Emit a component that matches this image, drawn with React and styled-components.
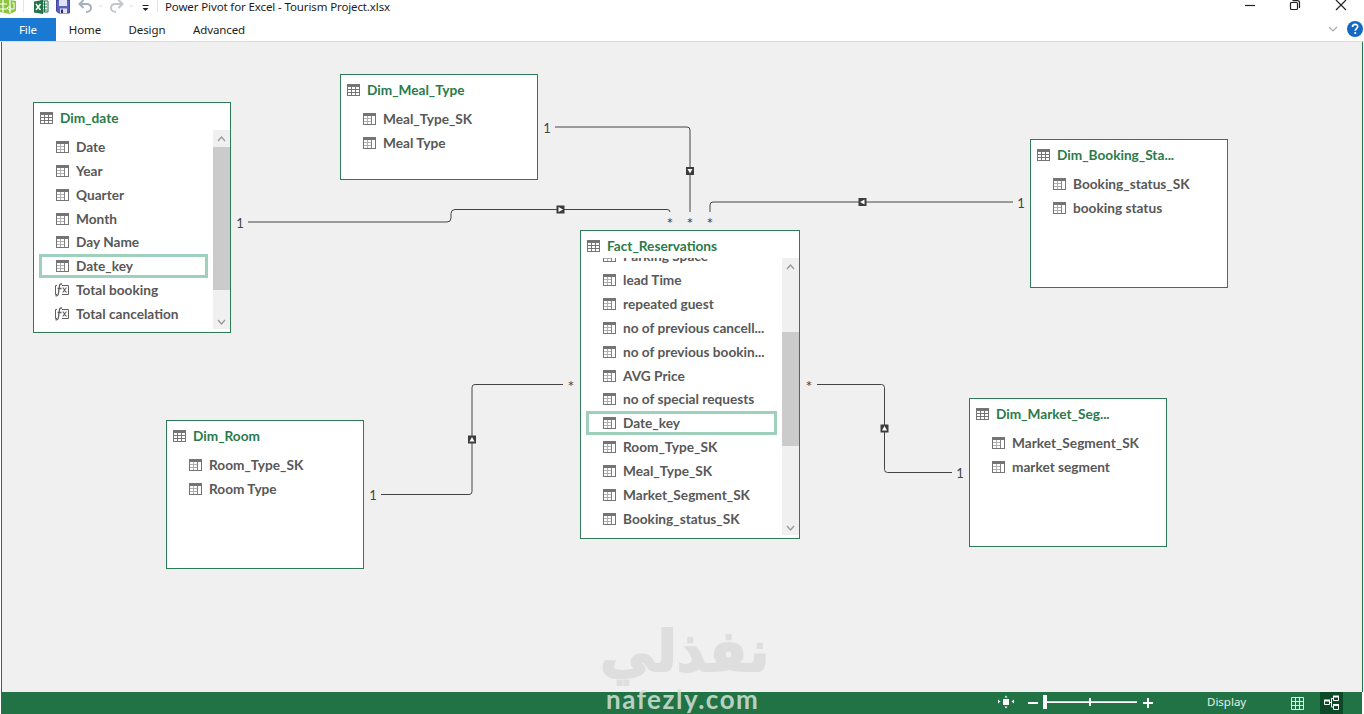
import styled, { createGlobalStyle, css } from 'styled-components'

const GlobalStyle = createGlobalStyle`
  * { box-sizing: border-box; }
  body {
    margin: 0;
    overflow: hidden;
    background: #fff;
    font-family: 'Noto Sans', 'Open Sans', sans-serif;
    font-size: 11.5px;
    color: #1c1c1c;
  }
  svg { display: block; flex: none; }
`

const Window = styled.div`
  width: 1364px;
  height: 714px;
  display: flex;
  flex-direction: column;
  background: #fff;
`

const TitleBar = styled.header`
  display: flex;
  justify-content: space-between;
  height: 18px;
`

const QuickAccess = styled.div`
  display: flex;
  align-items: flex-start;
`

const Title = styled.span`
  margin-left: 7px;
  line-height: 14px;
  font-size: 11.5px;
  letter-spacing: -0.12px;
  white-space: nowrap;
`

const Ribbon = styled.nav`
  display: flex;
  height: 24px;
  border-bottom: 1px solid #dcdcdc;
`

const Tab = styled.div`
  width: ${p => p.$w}px;
  height: 23px;
  line-height: 24px;
  text-align: center;
  font-size: 11.5px;
  letter-spacing: -0.1px;
  ${p => p.$active && css`
    background: #1979d3;
    color: #fff;
  `}
`

const RibbonEnd = styled.div`
  display: flex;
  align-items: flex-start;
  margin-left: auto;
  padding-top: 1px;
`

const Canvas = styled.main`
  position: relative;
  height: 650px;
  margin: 0 1px;
  background: #f0f0f0;
  border-left: 1px solid #217346;
  border-right: 1px solid #217346;
  font-family: Lato, 'Open Sans', sans-serif;
`

const Card = styled.section`
  position: absolute;
  left: ${p => p.$x}px;
  top: ${p => p.$y}px;
  width: ${p => p.$w}px;
  height: ${p => p.$h}px;
  display: flex;
  flex-direction: column;
  background: #fff;
  border: 1px solid #2f7a57;
  font-weight: 700;
  font-size: 13.67px;
  color: #585858;
`

const CardHead = styled.div`
  display: flex;
  align-items: center;
  gap: 7px;
  flex: none;
  height: 27px;
  padding: 3px 0 0 6px;
  color: #2a7a4c;
  white-space: nowrap;
  line-height: 18px;
`

const CardBody = styled.div`
  display: flex;
  flex: 1;
  min-height: 0;
  overflow: hidden;
  padding-bottom: 3px;
`

const Fields = styled.div`
  flex: 1;
  min-width: 0;
  overflow: hidden;
  padding: 0 5px;
`

const FieldList = styled.div`
  margin-top: ${p => p.$offset}px;
`

const Field = styled.div`
  display: flex;
  align-items: center;
  gap: 7px;
  height: 23.87px;
  padding-left: 14px;
  border: 3px solid ${p => (p.$selected ? '#9fd0bc' : 'transparent')};
  white-space: nowrap;
  line-height: 18px;
`

const Scrollbar = styled.div`
  display: flex;
  flex-direction: column;
  justify-content: space-between;
  width: 17px;
  background: #f0f0f0;
`

const Track = styled.div`
  flex: 1;
  padding-top: ${p => p.$before}px;
`

const Thumb = styled.div`
  height: ${p => p.$h}px;
  background: #cbcbcb;
`

const Links = styled.svg`
  position: absolute;
  left: 0;
  top: 0;
`

const Mark = styled.span`
  position: absolute;
  left: ${p => p.$x}px;
  top: ${p => p.$y}px;
  width: 12px;
  line-height: 14px;
  text-align: center;
  color: #444;
  font-size: ${p => (p.$many ? 16 : 13)}px;
`

const StatusBar = styled.footer`
  display: flex;
  align-items: center;
  justify-content: flex-end;
  height: 22px;
  margin: 0 2px 0 1px;
  padding-right: 19px;
  background: #217346;
  color: #fff;
`

const Display = styled.span`
  width: 39px;
  margin: 0 40px 0 50px;
  padding-bottom: 3px;
  white-space: nowrap;
  color: #e4efe8;
`

const Views = styled.div`
  display: flex;
  gap: 11px;
`

const ViewButton = styled.div`
  display: flex;
  align-items: center;
  justify-content: center;
  width: 23px;
  height: 22px;
  background: ${p => (p.$active ? '#0c4a27' : 'transparent')};
`

const WatermarkArabic = styled.div`
  position: absolute;
  left: 600px;
  top: 611px;
  font-family: 'DejaVu Sans', sans-serif;
  font-weight: 700;
  font-size: 57px;
  line-height: 80px;
  color: #dedede;
  -webkit-text-stroke: 2px #dedede;
  white-space: nowrap;
  transform-origin: 0 0;
  transform: scaleX(0.97);
`

const WatermarkLatin = styled.div`
  position: absolute;
  left: 606px;
  top: 683px;
  font-family: Lato, sans-serif;
  font-weight: 700;
  font-size: 26px;
  line-height: 32px;
  letter-spacing: 1.5px;
  color: rgba(215, 226, 218, 0.85);
  white-space: nowrap;
`

const TableIcon = () => (
  <svg width="13" height="12" viewBox="0 0 13 12">
    <rect width="13" height="12" fill="#747474" />
    <path fill="#fff" d="M1 3h3v2H1zM5 3h3v2H5zM9 3h3v2H9zM1 6h3v2H1zM5 6h3v2H5zM9 6h3v2H9zM1 9h3v2H1zM5 9h3v2H5zM9 9h3v2H9z" />
  </svg>
)

const ColumnIcon = () => (
  <svg width="13" height="12" viewBox="0 0 13 12">
    <rect width="13" height="12" fill="#747474" />
    <path fill="#fff" d="M1 3h11v8H1z" />
    <path fill="#b0b0b0" d="M4 3h1v8H4zM1 5h7v1H1zM1 8h7v1H1z" />
    <path fill="#858585" d="M8 3h1v8H8z" />
  </svg>
)

const MeasureSvg = styled.svg`
  margin: 0 0 0 -2px;
`

const MeasureIcon = () => (
  <MeasureSvg width="15" height="14" viewBox="0 0 15 14" fill="none" stroke="#606060">
    <path d="M3 2.500H1.500v9H3M8 2.500h6.500v9H8" />
    <path d="M8 1.200c-2.200-.8-2.500.8-2.800 3.300l-.7 5.500c-.3 2.200-1.200 3.200-3 2.700M3.500 5.500h4" strokeWidth="1.300" />
    <path d="M8.500 4.800c2 0 2 4.500 4.200 4.500M12.700 4.800c-2 0-2.500 4.500-4.200 4.500" strokeWidth="1.100" />
  </MeasureSvg>
)

const Chevron = ({ up }) => (
  <svg width="17" height="17" viewBox="0 0 17 17" fill="none" stroke="#999" strokeWidth="1.300">
    <path d={up ? 'M5 11l3.500-4 3.500 4' : 'M5 8l3.500 4L12 8'} />
  </svg>
)

const QuickIcons = () => (
  <svg width="158" height="18" viewBox="0 0 158 18">
    <path d="M0 0h10l6 1v10l-6 3-10-2z" fill="#8cc63f" />
    <path d="M0 4h7M0 9h7M3 0v12M10 0v13" stroke="#fff" strokeWidth="1.200" />
    <path d="M12 3l2 0v6h-4M7 8l3-2v5z" stroke="#fff" fill="none" />
    <path d="M23.500 0v12M157.500 0v12" stroke="#e4e4e4" />
    <path d="M40 1h8v11h-8z" fill="#fff" stroke="#217346" />
    <path d="M41 4h6M41 7h6M41 10h6M44.500 1v11" stroke="#217346" />
    <path d="M34 1.500L43 0v14l-9-1.500z" fill="#217346" />
    <path d="M36 4l4.500 6M40.500 4L36 10" stroke="#fff" strokeWidth="1.500" />
    <path d="M56.500 0h13v13h-11l-2-2z" fill="#5a60c0" stroke="#3f449c" />
    <path d="M59 0h8v6h-8z" fill="#dfe4f8" />
    <path d="M60 8.500h7v4.500h-7z" fill="#e2e4f2" />
    <path d="M61 9.500h2v3.500h-2z" fill="#252a6c" />
    <path d="M83.500 0l-4 4 4 4M80 4h6.500c3 0 4.500 1.800 4.500 4s-2 4-5 4" fill="none" stroke="#a9b0bd" strokeWidth="2" />
    <path d="M118.500 0l4 4-4 4M122 4h-6.500c-3 0-4.500 1.800-4.500 4s2 4 5 4" fill="none" stroke="#c3c7cc" strokeWidth="2" />
    <path d="M98 5h5l-2.500 2.500zM129 5h5l-2.500 2.500z" fill="#ececec" />
    <path d="M142.500 5.500h6" stroke="#222" />
    <path d="M142.500 8h6l-3 3z" fill="#222" />
  </svg>
)

const WindowControls = () => (
  <svg width="120" height="18" viewBox="1244 0 120 18" fill="none" stroke="#222" strokeWidth="1.200">
    <path d="M1245 5.500h10" />
    <rect x="1290.500" y="2.500" width="7" height="7" rx="1" />
    <path d="M1292.500.6h5q2 0 2 2v5.400" />
    <path d="M1336 0l10 10M1346 0l-10 10" />
  </svg>
)

const HelpIcon = () => (
  <svg width="40" height="20" viewBox="0 0 40 20">
    <path d="M5 8l4 4 4-4" fill="none" stroke="#aaa" strokeWidth="1.200" />
    <circle cx="31" cy="10" r="8" fill="#1268c3" />
    <path d="M28.500 8c0-3.500 5.200-3.300 5.200-.4 0 2-2.500 2-2.500 4.200" fill="none" stroke="#fff" strokeWidth="1.700" />
    <circle cx="31.200" cy="14" r="1.100" fill="#fff" />
  </svg>
)

const ZoomControls = () => (
  <svg width="160" height="22" viewBox="997 692 160 22" fill="#fff">
    <path d="M1003 699h6v6h-6zM1004.500 697.500h3l-1.500-2zM1004.500 706.500h3l-1.500 2zM998 699.500v4l2.500-2zM1014 699.500v4l-2.500-2z" />
    <path d="M1028 702h10v2h-10zM1043 695h4v14h-4zM1047 701.300h90v1.600h-90zM1089 698h2v8h-2zM1143 702h10v2h-10zM1147 698h2v10h-2z" />
  </svg>
)

const GridIcon = () => (
  <svg width="13" height="13" viewBox="0 0 13 13" fill="none" stroke="#e4efe8">
    <path d="M.5.5h12v12H.5zM4.500.5v12M8.500.5v12M.5 4.500h12M.5 8.500h12" />
  </svg>
)

const DiagramIcon = () => (
  <svg width="17" height="16" viewBox="0 0 17 16" fill="none" stroke="#fff">
    <path d="M1.500 5.500h5v4h-5zM10.500 1.500h5v4h-5zM10.500 9.500h5v5h-5zM6.500 7.500h2M8.500 3v9M8.500 3.500h2M8.500 12h2" />
    <path d="M1 5.500h6M10 1.500h6M10 10h6" strokeWidth="2" />
  </svg>
)

// direction markers sit on the middle of each relationship line
const arrows = {
  right: 'M-2-2.500L2.500 0-2 2.500z',
  left: 'M2-2.500L-2.500 0 2 2.500z',
  up: 'M-2.500 2L0-2.500 2.500 2z',
  down: 'M-2.500-2L0 2.500 2.500-2z',
}

const links = [
  { d: 'M246 180H445Q449 180 449 176V171.500Q449 167.500 453 167.500H665Q668 167.500 668 170', x: 558.5, y: 167.5, dir: 'right' },
  { d: 'M553 85H685Q688 85 688 88V170', x: 688, y: 129, dir: 'down' },
  { d: 'M708 170V163Q708 160 711 160H1011', x: 860.5, y: 160, dir: 'left' },
  { d: 'M561 342.500H473Q470 342.500 470 345.500V449.500Q470 452.500 467 452.500H379', x: 470, y: 397.5, dir: 'up' },
  { d: 'M815 342.500H879.500Q882.500 342.500 882.500 345.500V427.500Q882.500 430.500 885.500 430.500H950', x: 882.5, y: 386.5, dir: 'up' },
]

const marks = [
  { x: 232, y: 174, text: '1' },
  { x: 539, y: 79, text: '1' },
  { x: 1013, y: 154, text: '1' },
  { x: 365, y: 446, text: '1' },
  { x: 952, y: 424, text: '1' },
  { x: 662, y: 174, text: '*' },
  { x: 682, y: 174, text: '*' },
  { x: 702, y: 174, text: '*' },
  { x: 563, y: 337, text: '*' },
  { x: 801, y: 337, text: '*' },
]

const tables = [
  {
    name: 'Dim_date', x: 31, y: 60, w: 198, h: 231, offset: 5,
    scroll: { before: 0, thumb: 143 },
    fields: [
      { name: 'Date' },
      { name: 'Year' },
      { name: 'Quarter' },
      { name: 'Month' },
      { name: 'Day Name' },
      { name: 'Date_key', selected: true },
      { name: 'Total booking', measure: true },
      { name: 'Total cancelation', measure: true },
    ],
  },
  {
    name: 'Dim_Meal_Type', x: 338, y: 32, w: 198, h: 106, offset: 5,
    fields: [{ name: 'Meal_Type_SK' }, { name: 'Meal Type' }],
  },
  {
    name: 'Dim_Booking_Sta...', x: 1028, y: 97, w: 198, h: 149, offset: 5,
    fields: [{ name: 'Booking_status_SK' }, { name: 'booking status' }],
  },
  {
    name: 'Fact_Reservations', x: 578, y: 188, w: 220, h: 309, offset: -13.7,
    scroll: { before: 57, thumb: 114 },
    fields: [
      { name: 'Parking Space' },
      { name: 'lead Time' },
      { name: 'repeated guest' },
      { name: 'no of previous cancell...' },
      { name: 'no of previous bookin...' },
      { name: 'AVG Price' },
      { name: 'no of special requests' },
      { name: 'Date_key', selected: true },
      { name: 'Room_Type_SK' },
      { name: 'Meal_Type_SK' },
      { name: 'Market_Segment_SK' },
      { name: 'Booking_status_SK' },
    ],
  },
  {
    name: 'Dim_Room', x: 164, y: 378, w: 198, h: 149, offset: 5,
    fields: [{ name: 'Room_Type_SK' }, { name: 'Room Type' }],
  },
  {
    name: 'Dim_Market_Seg...', x: 967, y: 356, w: 198, h: 149, offset: 5,
    fields: [{ name: 'Market_Segment_SK' }, { name: 'market segment' }],
  },
]

const Table = ({ table }) => (
  <Card $x={table.x} $y={table.y} $w={table.w} $h={table.h}>
    <CardHead><TableIcon />{table.name}</CardHead>
    <CardBody>
      <Fields>
        <FieldList $offset={table.offset}>
          {table.fields.map(f => (
            <Field key={f.name} $selected={f.selected}>
              {f.measure ? <MeasureIcon /> : <ColumnIcon />}
              {f.name}
            </Field>
          ))}
        </FieldList>
      </Fields>
      {table.scroll && (
        <Scrollbar>
          <Chevron up />
          <Track $before={table.scroll.before}>
            <Thumb $h={table.scroll.thumb} />
          </Track>
          <Chevron />
        </Scrollbar>
      )}
    </CardBody>
  </Card>
)

function App() {
  return (
    <>
      <GlobalStyle />
      <Window>
        <TitleBar>
          <QuickAccess>
            <QuickIcons />
            <Title>Power Pivot for Excel - Tourism Project.xlsx</Title>
          </QuickAccess>
          <WindowControls />
        </TitleBar>
        <Ribbon>
          <Tab $active $w={56}>File</Tab>
          <Tab $w={58}>Home</Tab>
          <Tab $w={66}>Design</Tab>
          <Tab $w={78}>Advanced</Tab>
          <RibbonEnd><HelpIcon /></RibbonEnd>
        </Ribbon>
        <Canvas>
          <Links width="1360" height="650" viewBox="0 0 1360 650">
            {links.map(l => (
              <g key={l.d}>
                <path d={l.d} fill="none" stroke="#444" />
                <g transform={`translate(${l.x} ${l.y})`}>
                  <rect x="-4" y="-4" width="8" height="8" fill="#3c3c3c" />
                  <path d={arrows[l.dir]} fill="#fff" />
                </g>
              </g>
            ))}
          </Links>
          {marks.map(m => (
            <Mark key={`${m.x}-${m.y}`} $x={m.x} $y={m.y} $many={m.text === '*'}>{m.text}</Mark>
          ))}
          {tables.map(t => <Table key={t.name} table={t} />)}
        </Canvas>
        <StatusBar>
          <ZoomControls />
          <Display>Display</Display>
          <Views>
            <ViewButton><GridIcon /></ViewButton>
            <ViewButton $active><DiagramIcon /></ViewButton>
          </Views>
        </StatusBar>
      </Window>
      <WatermarkArabic>نفذلي</WatermarkArabic>
      <WatermarkLatin>nafezly.com</WatermarkLatin>
    </>
  )
}

export default App
